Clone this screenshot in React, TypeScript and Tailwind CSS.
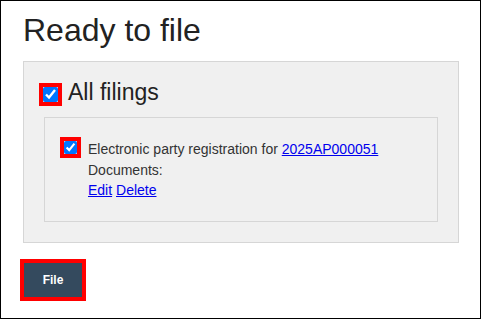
export default function App() {
	return (
		<div className="w-[481px] h-[319px] border border-black bg-white pl-[22px] pr-[22px] font-['Liberation_Sans',Arial,sans-serif] text-[#333]">
			<h1 className="mt-[11px] text-[32px] leading-[36px] text-[#222]">Ready to file</h1>

			{/* Bloco com todas as submissões */}
			<div className="mt-[13px] w-[436px] border border-[#d6d6d6] bg-[#f0f0f0] pt-[16px] pr-[20px] pb-[20px] pl-[20px]">
				<label className="flex items-start">
					<input
						type="checkbox"
						checked
						readOnly
						className="ml-[-1px] mt-[9px] h-[15px] w-[15px] shrink-0 outline-4 outline-solid outline-[#ff0000] accent-[#0075ff]"
					/>
					<span className="ml-[10px] text-[23px] leading-[28px] text-[#222]">All filings</span>
				</label>

				<div className="mt-[11px] border border-[#d6d6d6] bg-[#f0f0f0] pt-[21px] pr-[20px] pb-[20px] pl-[19px]">
					<div className="flex items-start">
						<input
							type="checkbox"
							checked
							readOnly
							className="mt-[2px] h-[13px] w-[13px] shrink-0 outline-4 outline-solid outline-[#ff0000] accent-[#0075ff]"
						/>
						<div className="ml-[11px] text-[14px] leading-[20.5px]">
							<div>
								Electronic party registration for{" "}
								<a href="#" className="text-[#0000ee] underline">
									2025AP000051
								</a>
							</div>
							<div>Documents:</div>
							<div>
								<a href="#" className="text-[#0000ee] underline">
									Edit
								</a>{" "}
								<a href="#" className="text-[#0000ee] underline">
									Delete
								</a>
							</div>
						</div>
					</div>
				</div>
			</div>

			<button
				type="button"
				className="mt-[20px] ml-[1px] h-[34px] w-[58px] bg-[#344a5e] text-[12px] font-bold text-white outline-4 outline-solid outline-[#ff0000]"
			>
				File
			</button>
		</div>
	);
}
